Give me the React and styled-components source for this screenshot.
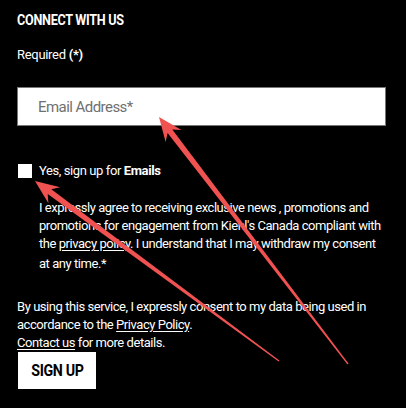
import React from 'react';
import styled, { createGlobalStyle } from 'styled-components';

const GlobalStyle = createGlobalStyle`
  html, body {
    margin: 0;
    padding: 0;
    background: #000;
  }
  body {
    font-family: Roboto, "Liberation Sans", Arial, sans-serif;
    color: #fff;
  }
`;

const Page = styled.div`
  position: relative;
  width: 406px;
  height: 408px;
  overflow: hidden;
  background: #000;
  padding: 12px 17px 0 17px;
  box-sizing: border-box;
  font-size: 13px;
  letter-spacing: -0.45px;
`;

const Heading = styled.h3`
  margin: 0;
  font-size: 14px;
  font-weight: 700;
  letter-spacing: -0.3px;
  line-height: 16px;
  text-transform: uppercase;
  transform: scaleX(0.9);
  transform-origin: left center;
`;

const Required = styled.p`
  margin: 18px 0 0;
  line-height: 18px;
  letter-spacing: -0.3px;
  b {
    font-weight: 700;
  }
`;

const EmailInput = styled.input`
  display: block;
  box-sizing: border-box;
  width: 369px;
  height: 39px;
  margin-top: 23px;
  padding: 0 0 0 20px;
  border: 1px solid #777;
  background: #fff;
  font-family: Roboto, "Liberation Sans", Arial, sans-serif;
  font-size: 15px;
  letter-spacing: -0.55px;
  color: #333;
  outline: none;
  &::placeholder {
    color: #707070;
  }
`;

const CheckRow = styled.label`
  display: flex;
  align-items: center;
  gap: 7px;
  margin-top: 37px;
  margin-left: 1px;
  line-height: 16px;
  letter-spacing: -0.4px;
  b {
    font-weight: 700;
  }
`;

const Box = styled.span`
  width: 14px;
  height: 14px;
  background: #fff;
  flex: none;
`;

const Consent = styled.p`
  margin: 20px 0 0 22px;
  line-height: 18px;
  white-space: nowrap;
`;

const LastLine = styled.span`
  display: inline-block;
  margin-top: 2px;
`;

const Legal = styled.p`
  margin: 25px 0 0;
  line-height: 18px;
  white-space: nowrap;
`;

const Link = styled.a`
  color: inherit;
  text-decoration: underline;
  text-underline-offset: 2px;
`;

const SignUp = styled.button`
  display: block;
  margin: 0 0 0 1px;
  width: 78px;
  height: 37px;
  border: none;
  background: #fff;
  color: #000;
  font-family: Roboto, "Liberation Sans", Arial, sans-serif;
  font-size: 16px;
  font-weight: 700;
  letter-spacing: -0.4px;
  padding: 0;
  span {
    display: inline-block;
    transform: scaleX(0.89);
  }
`;

const Overlay = styled.svg`
  position: absolute;
  left: 0;
  top: 0;
  pointer-events: none;
`;

function arrowPoints(tip, tail) {
  const dx = tail[0] - tip[0];
  const dy = tail[1] - tip[1];
  const len = Math.hypot(dx, dy);
  const ux = dx / len;
  const uy = dy / len;
  const nx = -uy;
  const ny = ux;
  const headLen = 24;
  const headHalf = 10;
  const neck = 18;
  const shaftHead = 3;
  const shaftTail = 0.6;
  const base = [tip[0] + ux * headLen, tip[1] + uy * headLen];
  const neckP = [tip[0] + ux * neck, tip[1] + uy * neck];
  const pts = [
    tip,
    [base[0] + nx * headHalf, base[1] + ny * headHalf],
    [neckP[0] + nx * shaftHead, neckP[1] + ny * shaftHead],
    [tail[0] + nx * shaftTail, tail[1] + ny * shaftTail],
    [tail[0] - nx * shaftTail, tail[1] - ny * shaftTail],
    [neckP[0] - nx * shaftHead, neckP[1] - ny * shaftHead],
    [base[0] - nx * headHalf, base[1] - ny * headHalf],
  ];
  return pts.map((p) => p.map((v) => v.toFixed(1)).join(',')).join(' ');
}

const arrows = [
  { tip: [159, 117], tail: [348, 364] },
  { tip: [35, 181], tail: [279, 361] },
];

export default function App() {
  return (
    <Page>
      <GlobalStyle />
      <Heading>Connect with us</Heading>
      <Required>
        Required <b>(*)</b>
      </Required>
      <EmailInput type="email" placeholder="Email Address*" />
      <CheckRow>
        <Box />
        <span>
          Yes, sign up for <b>Emails</b>
        </span>
      </CheckRow>
      <Consent>
        I expressly agree to receiving exclusive news , promotions and
        <br />
        promotions for engagement from Kiehl's Canada compliant with
        <br />
        the <Link href="#">privacy policy</Link>. I understand that I may withdraw my consent
        <br />
        <LastLine>at any time.*</LastLine>
      </Consent>
      <Legal>
        By using this service, I expressly consent to my data being used in
        <br />
        accordance to the <Link href="#">Privacy Policy</Link>.
        <br />
        <Link href="#">Contact us</Link> for more details.
      </Legal>
      <SignUp>
        <span>SIGN UP</span>
      </SignUp>
      <Overlay width="406" height="408" viewBox="0 0 406 408">
        {arrows.map((a, i) => (
          <polygon key={i} points={arrowPoints(a.tip, a.tail)} fill="#f05252" />
        ))}
      </Overlay>
    </Page>
  );
}
